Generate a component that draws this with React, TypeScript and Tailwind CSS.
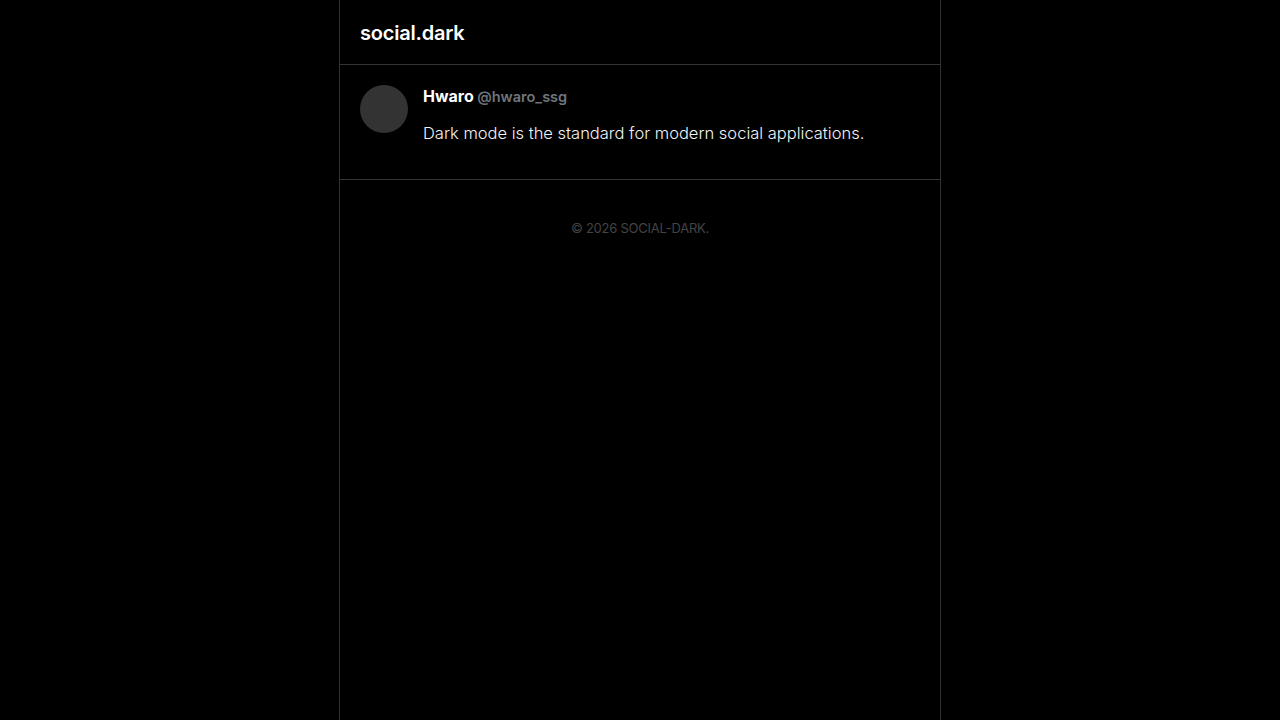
export default function App() {
  return (
    <div className="min-h-screen bg-black text-white font-['Inter',sans-serif]">
      <div className="mx-auto w-[602px] min-h-screen border-x border-[#333]">
        <header className="px-5 pt-[2px] h-[65px] flex items-center border-b border-[#333]">
          <h1 className="text-xl font-semibold tracking-[-0.2px]">social.dark</h1>
        </header>
        <article className="flex gap-[15px] px-5 pt-5 pb-[32px] border-b border-[#333]">
          <div className="w-12 h-12 rounded-full bg-[#333] shrink-0"></div>
          <div>
            <div className="leading-[22px] mb-[12px]">
              <span className="font-bold">Hwaro</span>{" "}
              <span className="-ml-[1px] text-[14.5px] font-semibold text-[#71767b]">@hwaro_ssg</span>
            </div>
            <p className="text-[16.5px] font-light leading-[27px] text-[#f2f4f5]">Dark mode is the standard for modern social applications.</p>
          </div>
        </article>
        <footer className="pt-[39px] text-center text-[13px] tracking-[-0.25px] text-[#444]">© 2026 SOCIAL-DARK.</footer>
      </div>
    </div>
  );
}
